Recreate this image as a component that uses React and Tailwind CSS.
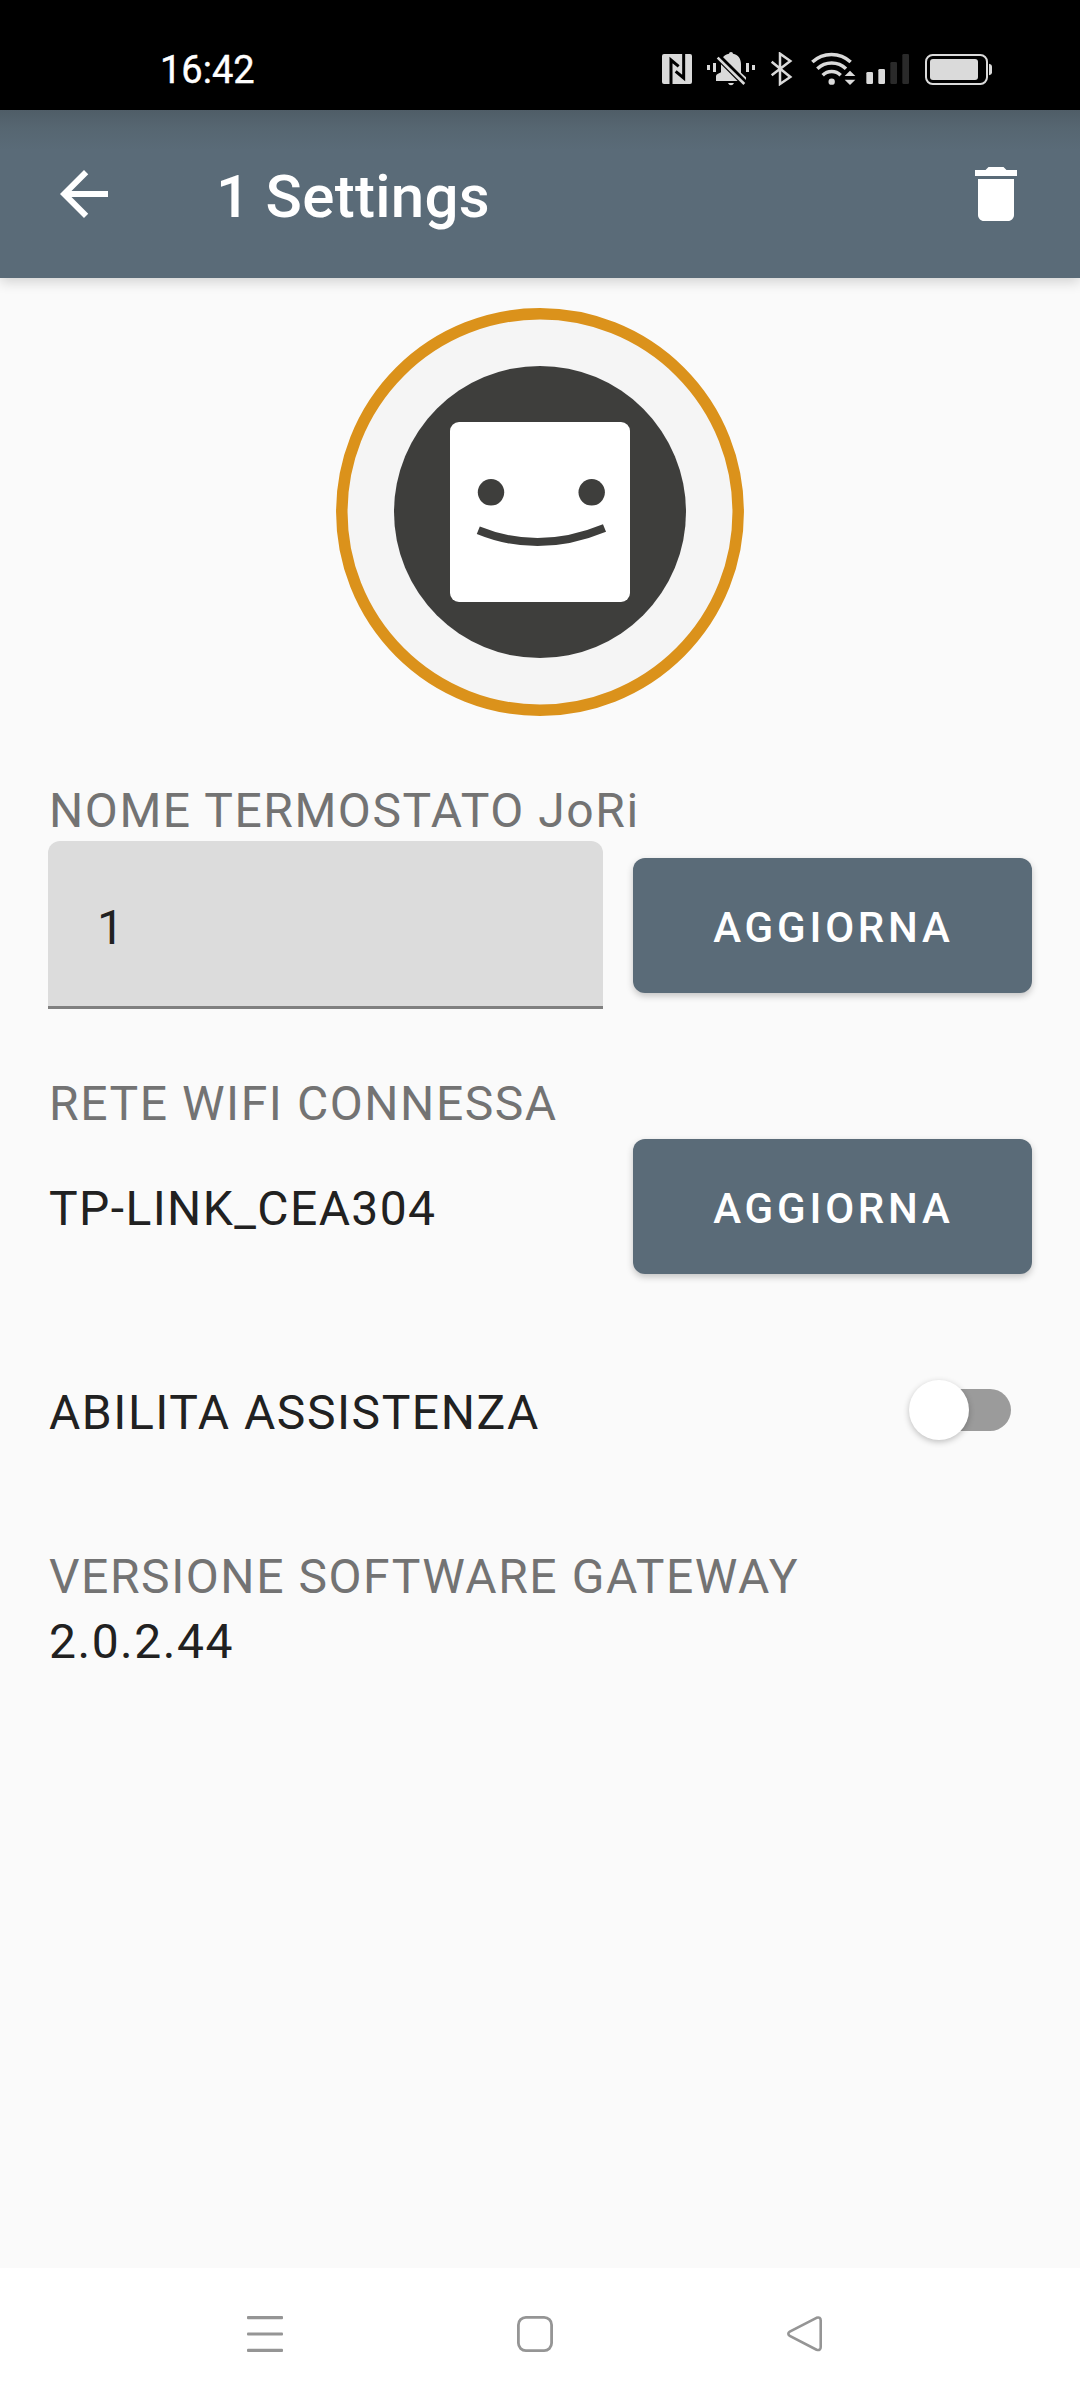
import { useState } from "react";

function StatusBar() {
  return (
    <div className="flex h-[110px] items-start justify-between bg-black pl-[160px] pr-[88px] pt-[52px] text-[#dadada]">
      <span className="-mt-[4px] text-[38px] leading-[44px] text-white [-webkit-text-stroke:0.4px_white]">16:42</span>

      <div className="flex">
        {/* nfc */}
        <svg className="h-[34px] w-[30px]" viewBox="66 66 90 102" fill="none">
          <rect x="66" y="72" width="90" height="90" rx="6" fill="currentColor" />
          <path d="M93 163V90l23 19M131 71v73l-24-20" stroke="#000" strokeWidth="9" />
        </svg>

        {/* muted bell */}
        <svg className="ml-[14px] h-[34px] w-[50px]" viewBox="198 66 150 102" fill="currentColor">
          <path d="M201 105h9v15h-9zM219 99h9v27h-9zM318 99h9v27h-9zM336 105h9v15h-9z" />
          <path d="M267 71q0-5 6-5t6 5c16 3 24 15 24 32v25l15 14v11h-90v-15q0-5 6-7l9-4v-24c0-17 8-29 24-32z" />
          <path d="M264 159h18q-3 7-9 7t-9-7z" />
          <path d="M229 75l88 88" stroke="#000" strokeWidth="20" />
          <path d="M233 83l80 79" stroke="currentColor" strokeWidth="8" />
        </svg>

        {/* bluetooth */}
        <svg className="ml-[14px] h-[34px] w-[23px]" viewBox="390 66 69 102" fill="none">
          <path d="M395 95l56 46-31 21V71l31 22-56 43" stroke="currentColor" strokeWidth="7.5" />
        </svg>

        {/* wifi */}
        <svg className="ml-[17px] h-[34px] w-[46px]" viewBox="510 66 138 102" fill="none">
          <g stroke="currentColor" strokeWidth="10.5">
            <path d="M517 96a84 84 0 0 1 115 0" />
            <path d="M532 116a62 62 0 0 1 86 0" />
            <path d="M548 136a38 38 0 0 1 54 0" />
          </g>
          <circle cx="575" cy="155" r="9.5" fill="currentColor" />
          <path d="M614 138l16-16 16 16zM614 149l16 16 16-16z" fill="currentColor" />
        </svg>

        {/* signal */}
        <svg className="ml-[10px] h-[34px] w-[44px]" viewBox="678 66 132 102" fill="currentColor">
          <rect x="679" y="126" width="20" height="36" rx="4" />
          <rect x="715" y="117" width="20" height="45" rx="4" />
          <rect x="751" y="96" width="20" height="66" rx="4" fill="#2a2a2a" />
          <rect x="787" y="72" width="20" height="90" rx="4" fill="#2a2a2a" />
        </svg>

        {/* battery */}
        <svg className="ml-[15px] h-[34px] w-[67px]" viewBox="855 66 201 102" fill="currentColor">
          <rect x="858" y="75" width="183" height="87" rx="20" fill="none" stroke="currentColor" strokeWidth="6" />
          <rect x="870" y="87" width="144" height="63" rx="9" />
          <path d="M1047 101q9 2 9 9v17q0 7-9 9z" />
        </svg>
      </div>
    </div>
  );
}

function Toolbar() {
  return (
    <header className="flex h-[168px] items-center bg-[#5a6b78] bg-linear-to-b from-[#4f5d67] from-0% via-[#566671] via-10% to-[#5a6b78] to-24% px-12 text-white shadow-[0_4px_12px_rgba(0,0,0,0.16)]">
      <button type="button" aria-label="Back">
        <svg className="size-[72px]" viewBox="0 0 24 24" fill="currentColor">
          <path d="M20 11H7.83l5.59-5.59L12 4l-8 8 8 8 1.41-1.41L7.83 13H20v-2z" />
        </svg>
      </button>
      <h1 className="ml-24 mt-[6px] flex-1 text-[60px] font-medium leading-[70px] tracking-[0.3px]">1 Settings</h1>
      <button type="button" aria-label="Delete">
        <svg className="size-[72px]" viewBox="0 0 24 24" fill="currentColor">
          <path d="M6 19c0 1.1.9 2 2 2h8c1.1 0 2-.9 2-2V7H6v12zM19 4h-3.5l-1-1h-5l-1 1H5v2h14V4z" />
        </svg>
      </button>
    </header>
  );
}

function Avatar() {
  return (
    <svg className="mx-auto mt-[30px] size-[408px]" viewBox="0 0 408 408" fill="none">
      <circle cx="204" cy="204" r="198.2" fill="#f5f5f5" stroke="#db921b" strokeWidth="11.5" />
      <circle cx="204" cy="204" r="146" fill="#3e3e3c" />
      <rect x="114" y="114" width="180" height="180" rx="9" fill="#fff" />
      <circle cx="155" cy="184.3" r="13.2" fill="#3e3e3c" />
      <circle cx="255.7" cy="184.3" r="13.2" fill="#3e3e3c" />
      <path d="M142.3 222.2Q203 247 268.5 220" stroke="#3e3e3c" strokeWidth="8" />
    </svg>
  );
}

function Label({ children }) {
  return <p className="h-14 pl-px leading-[56px] tracking-[1.56px] text-[#737373]">{children}</p>;
}

function UpdateButton({ className = "" }) {
  return (
    <button
      type="button"
      className={`h-[135px] w-[399px] shrink-0 rounded-xl bg-[#5a6b78] pl-[2px] pt-[3px] text-[42px] font-medium tracking-[3.8px] text-white shadow-[0_3px_7px_rgba(0,0,0,0.22)] ${className}`}
    >
      AGGIORNA
    </button>
  );
}

function Switch({ checked, onChange }) {
  return (
    <button
      type="button"
      role="switch"
      aria-checked={checked}
      onClick={() => onChange(!checked)}
      className="relative mr-[21px] flex h-[60px] w-[102px] items-center"
    >
      <span className="ml-2 h-[42px] flex-1 rounded-full bg-[#9b9b9b]" />
      <span
        className={`absolute top-0 size-[60px] rounded-full bg-white shadow-[0_2px_6px_rgba(0,0,0,0.24)] ${
          checked ? "right-0" : "left-0"
        }`}
      />
    </button>
  );
}

function NavBar() {
  return (
    <nav className="flex h-[132px] gap-[234px] bg-white pl-[247px] pt-12 text-[#959595]">
      <svg className="size-9" viewBox="0 0 36 36" fill="currentColor">
        <rect width="36" height="3.2" rx="1" />
        <rect y="16.4" width="36" height="3.2" rx="1" />
        <rect y="32.8" width="36" height="3.2" rx="1" />
      </svg>
      <svg className="size-9" viewBox="0 0 36 36" fill="none">
        <rect x="1.4" y="1.4" width="33.2" height="33.2" rx="7.5" stroke="currentColor" strokeWidth="2.8" />
      </svg>
      <svg className="size-9" viewBox="0 0 36 36" fill="none">
        <path
          d="M29.5 1.8L2.8 15.7q-3 2 0 4.2l26.7 13.8q4.2 1.4 4.2-2.8V4.6q0-4.2-4.2-2.8z"
          stroke="currentColor"
          strokeWidth="2.6"
        />
      </svg>
    </nav>
  );
}

export default function App() {
  const [name, setName] = useState("1");
  const [assistance, setAssistance] = useState(false);

  return (
    <div className="flex h-[2400px] w-[1080px] flex-col bg-[#fafafa] font-[Roboto,sans-serif]">
      <StatusBar />
      <Toolbar />

      <main className="flex flex-1 flex-col px-12 text-[48px] tracking-[1.5px] text-[#212121]">
        <Avatar />

        <div className="mt-[67px]">
          <Label>NOME TERMOSTATO JoRi</Label>
          <div className="mt-[2px] flex items-start justify-between">
            <input
              type="text"
              value={name}
              onChange={(e) => setName(e.target.value)}
              className="h-[168px] w-[555px] rounded-t-xl border-b-3 border-[#808080] bg-[#dcdcdc] pl-[49px] pr-12 pt-[8px] outline-none"
            />
            <UpdateButton className="mt-[17px]" />
          </div>
        </div>

        <div className="mt-[67px]">
          <Label>RETE WIFI CONNESSA</Label>
          <div className="mt-[7px] flex items-center justify-between">
            <p className="mt-1 pl-px leading-[56px] tracking-[1.4px]">TP-LINK_CEA304</p>
            <UpdateButton />
          </div>
        </div>

        <div className="mt-[106px] flex h-[60px] items-start justify-between">
          <p className="mt-[5px] pl-px leading-[56px] tracking-[1.56px]">ABILITA ASSISTENZA</p>
          <Switch checked={assistance} onChange={setAssistance} />
        </div>

        <div className="mt-[109px]">
          <Label>VERSIONE SOFTWARE GATEWAY</Label>
          <p className="mt-[9px] pl-px leading-[56px]">2.0.2.44</p>
        </div>
      </main>

      <NavBar />
    </div>
  );
}
